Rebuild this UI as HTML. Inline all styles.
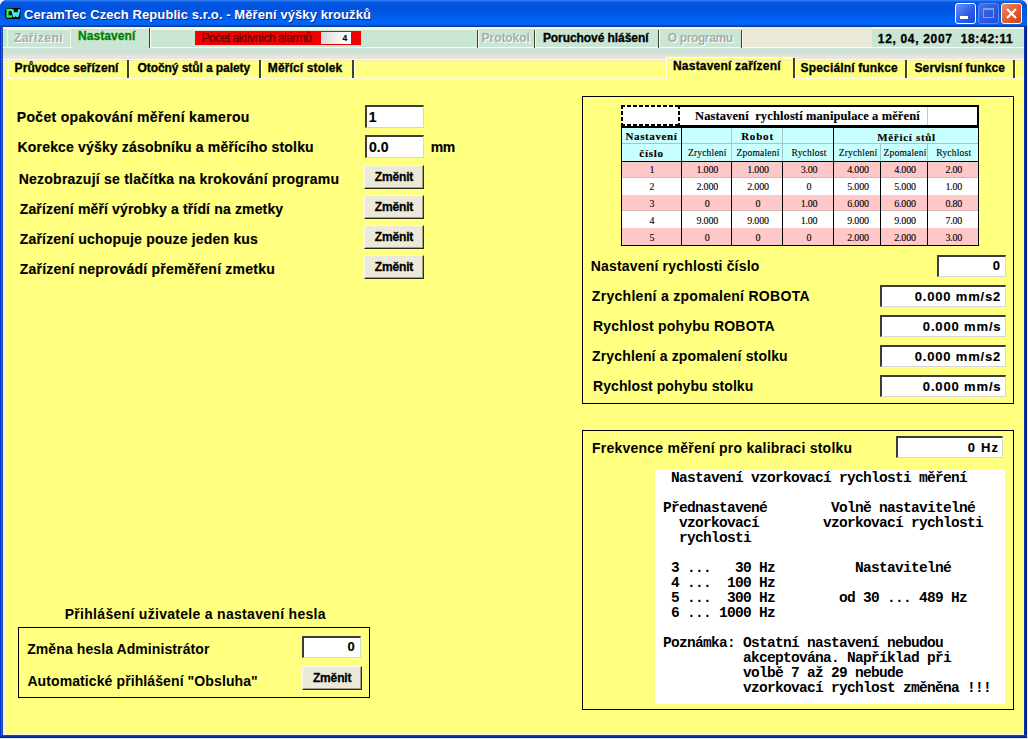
<!DOCTYPE html>
<html><head><meta charset="utf-8"><style>
*{margin:0;padding:0;box-sizing:border-box}
html,body{width:1028px;height:739px;overflow:hidden;position:relative;background:#f0f0f8}
.a{position:absolute}
.t{position:absolute;white-space:pre}
#frame{position:absolute;left:0;top:0;width:1027px;height:738px;background:#0832c0;border-radius:7px 7px 0 0}
#titlebar{position:absolute;left:0;top:0;width:1027px;height:27px;border-radius:7px 7px 0 0;
 background:linear-gradient(to bottom,#3d8eff 0px,#1a6af0 1px,#0757dc 3px,#0052e0 6px,#0055e6 12px,#005ff2 18px,#0066f8 22px,#0060f2 25px,#0a3c9c 26px,#0a3c9c 27px)}
#client{position:absolute;left:3px;top:27px;width:1021px;height:707px;background:#ffff80}
.ctl{position:absolute;width:21px;height:21px;border:1px solid #fff;border-radius:3px}
.inp{position:absolute;background:#fff;border-top:2px solid #3c3c3c;border-left:2px solid #3c3c3c;border-right:1px solid #d8d8d0;border-bottom:1px solid #d8d8d0}
.btn{position:absolute;background:#ece9d8;border-top:1px solid #fafaf4;border-left:1px solid #fafaf4;border-right:1px solid #2a2a1a;border-bottom:1px solid #2a2a1a;box-shadow:inset -1px -1px 0 #a0a090}
.box{position:absolute;border:1px solid #000}
.sep{position:absolute;width:3px;background:#fbfbf0;border-left:2px solid #404030;margin-left:0}

</style></head><body>
<div id="frame"></div>
<div class="a" style="left:0;top:20px;width:3px;height:718px;background:linear-gradient(to right,#0030c8 0 1px,#2c5ce4 1px 2px,#1a46b4 2px 3px)"></div>
<div class="a" style="left:1024px;top:20px;width:3px;height:718px;background:linear-gradient(to right,#0a30b0 0 1px,#0628a0 1px 2px,#001c88 2px 3px)"></div>
<div class="a" style="left:0;top:735px;width:1027px;height:3px;background:linear-gradient(to bottom,#1040c0 0 1px,#0830a8 1px 2px,#001c80 2px 3px)"></div>
<div id="titlebar"></div>
<!-- icon -->
<svg class="a" style="left:0;top:0" width="24" height="24">
<path d="M7 8 H20.5 V17 L19.5 19 H7 L5 17 V10 Z" fill="#000"/>
<path d="M12 10 H7.5 V16.5 H12" stroke="#30f048" stroke-width="2.4" fill="none"/>
<path d="M12.3 9.2 L14 16.8 L15.7 12.5 L17.4 16.8 L19.4 9.2" stroke="#40f0f0" stroke-width="2.2" fill="none" stroke-linejoin="bevel"/>
</svg>
<!-- window controls -->
<div class="ctl" style="left:955px;top:3px;background:linear-gradient(135deg,#6f8ff8,#2a5ce8 60%,#1c48d0)"></div>
<div class="a" style="left:960px;top:16px;width:8px;height:3px;background:#fff"></div>
<div class="ctl" style="left:978px;top:3px;border-color:#5a88f0;background:linear-gradient(135deg,#4a70e8,#2a58e0 60%,#2050d8)"></div>
<div class="a" style="left:983px;top:8px;width:11px;height:10px;border:1px solid #7fa0f0;border-top-width:2px"></div>
<div class="ctl" style="left:1001px;top:3px;background:linear-gradient(135deg,#f08a6a,#e05a30 55%,#c84018)"></div>
<svg class="a" style="left:1001px;top:3px" width="21" height="21"><path d="M6 6 L15 15 M15 6 L6 15" stroke="#fff" stroke-width="2.2"/></svg>
<div id="client"></div>
<div class="a" style="left:3px;top:27px;width:1px;height:707px;background:#e4f6ff"></div>
<div class="a" style="left:4px;top:27px;width:1px;height:707px;background:#eef4d8"></div>
<div class="a" style="left:1023px;top:27px;width:1px;height:707px;background:#f4f8e0"></div>
<div class="a" style="left:3px;top:734px;width:1021px;height:1px;background:#f4f8e0"></div>
<!-- toolbar -->
<div class="a" style="left:3px;top:27px;width:1021px;height:32px;background:#c8e6d3"></div>
<div class="a" style="left:3px;top:27px;width:1021px;height:1px;background:#eef4f8"></div>
<div class="a" style="left:3px;top:28px;width:1021px;height:1px;background:#fbfbf0"></div>
<div class="a" style="left:3px;top:47px;width:69px;height:1px;background:#f4fff8"></div>
<div class="a" style="left:150px;top:47px;width:874px;height:1px;background:#f4fff8"></div>
<div class="a" style="left:3px;top:48px;width:1021px;height:6px;background:#cde3da"></div>
<div class="a" style="left:3px;top:54px;width:1021px;height:2px;background:#d8e6d4"></div>
<div class="a" style="left:3px;top:56px;width:1021px;height:3px;background:#ece4dc"></div>
<div class="a" style="left:7px;top:29px;width:64px;height:19px;border:1px solid #f4f8ec"></div>
<div class="sep" style="left:149px;top:28px;height:20px;width:2px;border-left-width:1px"></div>
<div class="a" style="left:151px;top:29px;width:326px;height:1px;background:#f4f8ec"></div>
<div class="a" style="left:195px;top:31px;width:166px;height:14px;background:#f00000"></div>
<div class="a" style="left:321px;top:32px;width:30px;height:12px;background:linear-gradient(to right,#d8d8d8,#f4f4f4 60%,#fff)"></div>
<div class="sep" style="left:477px;top:30px;height:18px;width:2px;border-left-width:1px"></div>
<div class="sep" style="left:534px;top:30px;height:18px;width:2px;border-left-width:1px"></div>
<div class="sep" style="left:658px;top:30px;height:18px;width:2px;border-left-width:1px"></div>
<div class="sep" style="left:741px;top:30px;height:18px;width:2px;border-left-width:1px"></div>
<div class="a" style="left:743px;top:27px;width:129px;height:20px;background:#ece9d8"></div>
<!-- tab row -->
<div class="a" style="left:3px;top:59px;width:1021px;height:1px;background:#fffce8"></div>
<div class="a" style="left:3px;top:60px;width:1021px;height:1px;background:#f0e8b8"></div>
<div class="a" style="left:3px;top:78px;width:663px;height:1px;background:#fbfbe0"></div>
<div class="a" style="left:794px;top:78px;width:230px;height:1px;background:#fbfbe0"></div>
<div class="a" style="left:8px;top:60px;width:1px;height:18px;background:#fbfbe0"></div>
<div class="sep" style="left:127px;top:60px;height:18px"></div>
<div class="sep" style="left:258.5px;top:60px;height:18px"></div>
<div class="sep" style="left:351.5px;top:60px;height:18px"></div>
<div class="a" style="left:665px;top:60px;width:1px;height:18px;background:#fbfbe0"></div>
<div class="a" style="left:666px;top:57px;width:128px;height:3px;background:#ffff80;border-top:1px solid #fffce8;border-left:1px solid #fffce8"></div>
<div class="a" style="left:666px;top:57px;width:1px;height:22px;background:#fffce8"></div>
<div class="sep" style="left:793px;top:58px;height:20px"></div>
<div class="sep" style="left:905px;top:60px;height:18px"></div>
<div class="sep" style="left:1012.5px;top:60px;height:18px"></div>
<!-- left inputs -->
<div class="inp" style="left:365px;top:105px;width:59px;height:23px"></div>
<div class="inp" style="left:365px;top:135px;width:59px;height:23px"></div>
<div class="btn" style="left:364px;top:165px;width:60px;height:24px"></div>
<div class="btn" style="left:364px;top:195px;width:60px;height:24px"></div>
<div class="btn" style="left:364px;top:225px;width:60px;height:24px"></div>
<div class="btn" style="left:364px;top:255px;width:60px;height:24px"></div>
<!-- right panel 1 -->
<div class="box" style="left:582px;top:96px;width:432px;height:308px"></div>
<div class="inp" style="left:937px;top:255px;width:69px;height:22px"></div>
<div class="inp" style="left:880px;top:285px;width:126px;height:22px"></div>
<div class="inp" style="left:880px;top:315px;width:126px;height:22px"></div>
<div class="inp" style="left:880px;top:345px;width:126px;height:22px"></div>
<div class="inp" style="left:880px;top:375px;width:126px;height:22px"></div>
<!-- right panel 2 -->
<div class="box" style="left:582px;top:430px;width:432px;height:280px"></div>
<div class="inp" style="left:896px;top:436px;width:107px;height:22px"></div>
<div class="a" style="left:655px;top:470px;width:350px;height:234px;background:#fff"></div>
<!-- bottom left -->
<div class="box" style="left:18px;top:627px;width:352px;height:71px"></div>
<div class="inp" style="left:302px;top:636px;width:59px;height:22px"></div>
<div class="btn" style="left:302px;top:666px;width:60px;height:24px"></div>
<!-- table -->
<div class="a" style="left:621px;top:105px;width:59px;height:22px;background:#fff"></div>
<div class="a" style="left:621px;top:105px;width:59px;height:2px;background:repeating-linear-gradient(to right,#000 0 4px,#fff 4px 6px)"></div>
<div class="a" style="left:621px;top:124px;width:59px;height:2px;background:repeating-linear-gradient(to right,#000 0 4px,#fff 4px 6px)"></div>
<div class="a" style="left:621px;top:105px;width:2px;height:21px;background:repeating-linear-gradient(to bottom,#000 0 4px,#fff 4px 6px)"></div>
<div class="a" style="left:678px;top:105px;width:2px;height:21px;background:repeating-linear-gradient(to bottom,#000 0 4px,#fff 4px 6px)"></div>
<div class="a" style="left:680px;top:105px;width:299px;height:23px;background:#fff;border-top:2px solid #000;border-bottom:3px solid #000;border-right:2px solid #000"></div>
<div class="a" style="left:927px;top:107px;width:1px;height:18px;background:#c8c8c8"></div>
<div class="a" style="left:621px;top:126px;width:60px;height:2px;background:#000"></div>
<div class="a" style="left:621px;top:128px;width:357px;height:33px;background:#c8ffff"></div>
<div class="a" style="left:621px;top:143px;width:357px;height:1px;background:#a0c8c8"></div>
<div class="a" style="left:621px;top:161px;width:358px;height:1px;background:#000"></div>
<div class="a" style="left:622px;top:162px;width:356px;height:16px;background:#ffc8c8"></div>
<div class="a" style="left:622px;top:177px;width:356px;height:1px;background:#d8b8b8"></div>
<div class="a" style="left:622px;top:178px;width:356px;height:17px;background:#fff"></div>
<div class="a" style="left:622px;top:195px;width:356px;height:16px;background:#ffc8c8"></div>
<div class="a" style="left:622px;top:210px;width:356px;height:1px;background:#d8b8b8"></div>
<div class="a" style="left:622px;top:211px;width:356px;height:17px;background:#fff"></div>
<div class="a" style="left:622px;top:228px;width:356px;height:17px;background:#ffc8c8"></div>
<div class="a" style="left:621px;top:245px;width:358px;height:1px;background:#000"></div>
<div class="a" style="left:621px;top:127px;width:1px;height:119px;background:#000"></div>
<div class="a" style="left:978px;top:127px;width:1px;height:119px;background:#000"></div>
<div class="a" style="left:681px;top:128px;width:1px;height:118px;background:#000"></div>
<div class="a" style="left:833px;top:128px;width:1px;height:118px;background:#000"></div>
<div class="a" style="left:731px;top:128px;width:1px;height:33px;background:#a0c8c8"></div>
<div class="a" style="left:782px;top:128px;width:1px;height:33px;background:#a0c8c8"></div>
<div class="a" style="left:880px;top:144px;width:1px;height:17px;background:#a0c8c8"></div>
<div class="a" style="left:927px;top:144px;width:1px;height:17px;background:#a0c8c8"></div>
<div class="a" style="left:731px;top:161px;width:1px;height:84px;background:#000"></div>
<div class="a" style="left:782px;top:161px;width:1px;height:84px;background:#000"></div>
<div class="a" style="left:880px;top:161px;width:1px;height:84px;background:#000"></div>
<div class="a" style="left:927px;top:161px;width:1px;height:84px;background:#000"></div>
<!-- mono block -->
<pre class="t" id="mono" style="left:655px;top:471px;font:bold 14.5px 'Liberation Mono',monospace;letter-spacing:-0.7px;line-height:15px;color:#000">  Nastavení vzorkovací rychlosti měření

 Přednastavené        Volně nastavitelné
   vzorkovací        vzorkovací rychlosti
   rychlosti

  3 ...   30 Hz          Nastavitelné
  4 ...  100 Hz
  5 ...  300 Hz        od 30 ... 489 Hz
  6 ... 1000 Hz

 Poznámka: Ostatní nastavení nebudou
           akceptována. Například při
           volbě 7 až 29 nebude
           vzorkovací rychlost změněna !!!</pre>

<div class="t" style="left:24px;top:6.7px;font:normal bold 13px 'Liberation Sans', sans-serif;line-height:16px;color:#fff;letter-spacing:0.077px;text-shadow:1px 1px 0 #0a2a8a;-webkit-text-stroke:0;">CeramTec Czech Republic s.r.o. - Měření výšky kroužků</div>
<div class="t" style="left:13.9px;top:29.7px;font:normal bold 12px 'Liberation Sans', sans-serif;line-height:16px;color:#a8aca8;letter-spacing:0.471px;text-shadow:1px 1px 0 #fff;">Zařízení</div>
<div class="t" style="-webkit-text-stroke:0.3px #008000;left:78px;top:27.7px;font:normal bold 12px 'Liberation Sans', sans-serif;line-height:16px;color:#008000;letter-spacing:0.075px;">Nastavení</div>
<div class="t" style="left:201.6px;top:29.5px;font:normal normal 12px 'Liberation Sans', sans-serif;line-height:16px;color:#500000;letter-spacing:-0.524px;">Počet aktivních alarmů</div>
<div class="t" style="-webkit-text-stroke:0.15px #000;left:342.5px;top:30px;font:normal bold 8.5px 'Liberation Sans', sans-serif;line-height:16px;color:#000;letter-spacing:0px;">4</div>
<div class="t" style="left:481.6px;top:29.5px;font:normal bold 12px 'Liberation Sans', sans-serif;line-height:16px;color:#a8aca8;letter-spacing:-0.071px;text-shadow:1px 1px 0 #fff;">Protokol</div>
<div class="t" style="-webkit-text-stroke:0.3px #000;left:542.9px;top:29.7px;font:normal bold 12px 'Liberation Sans', sans-serif;line-height:16px;color:#000;letter-spacing:-0.069px;">Poruchové hlášení</div>
<div class="t" style="left:667.8px;top:29.7px;font:normal bold 12px 'Liberation Sans', sans-serif;line-height:16px;color:#a8aca8;letter-spacing:-0.378px;text-shadow:1px 1px 0 #fff;">O programu</div>
<div class="t" style="-webkit-text-stroke:0.3px #000;left:877.8px;top:30.6px;font:normal bold 12px 'Liberation Sans', sans-serif;line-height:16px;color:#000;letter-spacing:0.676px;">12, 04, 2007  18:42:11</div>
<div class="t" style="-webkit-text-stroke:0.3px #000;left:14.6px;top:59.7px;font:normal bold 12px 'Liberation Sans', sans-serif;line-height:16px;color:#000;letter-spacing:0.069px;">Průvodce seřízení</div>
<div class="t" style="-webkit-text-stroke:0.3px #000;left:137.5px;top:59.7px;font:normal bold 12px 'Liberation Sans', sans-serif;line-height:16px;color:#000;letter-spacing:-0.074px;">Otočný stůl a palety</div>
<div class="t" style="-webkit-text-stroke:0.3px #000;left:267.8px;top:59.7px;font:normal bold 12px 'Liberation Sans', sans-serif;line-height:16px;color:#000;letter-spacing:0.142px;">Měřící stolek</div>
<div class="t" style="-webkit-text-stroke:0.3px #000;left:673px;top:57.7px;font:normal bold 12px 'Liberation Sans', sans-serif;line-height:16px;color:#000;letter-spacing:0.206px;">Nastavení zařízení</div>
<div class="t" style="-webkit-text-stroke:0.3px #000;left:800.6px;top:59.7px;font:normal bold 12px 'Liberation Sans', sans-serif;line-height:16px;color:#000;letter-spacing:0.16px;">Speciální funkce</div>
<div class="t" style="-webkit-text-stroke:0.3px #000;left:914.5px;top:59.7px;font:normal bold 12px 'Liberation Sans', sans-serif;line-height:16px;color:#000;letter-spacing:0.121px;">Servisní funkce</div>
<div class="t" style="-webkit-text-stroke:0.15px #000;left:16.8px;top:108.8px;font:normal bold 14px 'Liberation Sans', sans-serif;line-height:16px;color:#000;letter-spacing:0.321px;">Počet opakování měření kamerou</div>
<div class="t" style="-webkit-text-stroke:0.15px #000;left:17.6px;top:139.1px;font:normal bold 14px 'Liberation Sans', sans-serif;line-height:16px;color:#000;letter-spacing:0.165px;">Korekce výšky zásobníku a měřícího stolku</div>
<div class="t" style="-webkit-text-stroke:0.15px #000;left:18.7px;top:171px;font:normal bold 14px 'Liberation Sans', sans-serif;line-height:16px;color:#000;letter-spacing:0.241px;">Nezobrazují se tlačítka na krokování programu</div>
<div class="t" style="-webkit-text-stroke:0.15px #000;left:19.7px;top:201px;font:normal bold 14px 'Liberation Sans', sans-serif;line-height:16px;color:#000;letter-spacing:0.155px;">Zařízení měří výrobky a třídí na zmetky</div>
<div class="t" style="-webkit-text-stroke:0.15px #000;left:19.7px;top:231px;font:normal bold 14px 'Liberation Sans', sans-serif;line-height:16px;color:#000;letter-spacing:0.2px;">Zařízení uchopuje pouze jeden kus</div>
<div class="t" style="-webkit-text-stroke:0.15px #000;left:19.7px;top:261px;font:normal bold 14px 'Liberation Sans', sans-serif;line-height:16px;color:#000;letter-spacing:0.224px;">Zařízení neprovádí přeměření zmetku</div>
<div class="t" style="-webkit-text-stroke:0.15px #000;left:430.8px;top:139px;font:normal bold 14px 'Liberation Sans', sans-serif;line-height:16px;color:#000;letter-spacing:-0.6px;">mm</div>
<div class="t" style="-webkit-text-stroke:0.15px #000;left:368.7px;top:108.8px;font:normal bold 14px 'Liberation Sans', sans-serif;line-height:16px;color:#000;letter-spacing:0px;">1</div>
<div class="t" style="-webkit-text-stroke:0.15px #000;left:369px;top:138.6px;font:normal bold 14px 'Liberation Sans', sans-serif;line-height:16px;color:#000;letter-spacing:0.0px;">0.0</div>
<div class="t" style="-webkit-text-stroke:0.3px #000;left:374.8px;top:168.9px;font:normal bold 12px 'Liberation Sans', sans-serif;line-height:16px;color:#000;letter-spacing:-0.16px;">Změnit</div>
<div class="t" style="-webkit-text-stroke:0.3px #000;left:374.8px;top:198.9px;font:normal bold 12px 'Liberation Sans', sans-serif;line-height:16px;color:#000;letter-spacing:-0.16px;">Změnit</div>
<div class="t" style="-webkit-text-stroke:0.3px #000;left:374.8px;top:228.9px;font:normal bold 12px 'Liberation Sans', sans-serif;line-height:16px;color:#000;letter-spacing:-0.16px;">Změnit</div>
<div class="t" style="-webkit-text-stroke:0.3px #000;left:374.8px;top:258.9px;font:normal bold 12px 'Liberation Sans', sans-serif;line-height:16px;color:#000;letter-spacing:-0.16px;">Změnit</div>
<div class="t" style="left:590.8px;top:257.8px;font:normal bold 14px 'Liberation Sans', sans-serif;line-height:16px;color:#000;letter-spacing:0.179px;">Nastavení rychlosti číslo</div>
<div class="t" style="left:591.8px;top:288.2px;font:normal bold 14px 'Liberation Sans', sans-serif;line-height:16px;color:#000;letter-spacing:0.296px;">Zrychlení a zpomalení ROBOTA</div>
<div class="t" style="left:592.9px;top:318px;font:normal bold 14px 'Liberation Sans', sans-serif;line-height:16px;color:#000;letter-spacing:0.224px;">Rychlost pohybu ROBOTA</div>
<div class="t" style="left:592px;top:348.4px;font:normal bold 14px 'Liberation Sans', sans-serif;line-height:16px;color:#000;letter-spacing:0.159px;">Zrychlení a zpomalení stolku</div>
<div class="t" style="left:593px;top:378.3px;font:normal bold 14px 'Liberation Sans', sans-serif;line-height:16px;color:#000;letter-spacing:0.076px;">Rychlost pohybu stolku</div>
<div class="t" style="-webkit-text-stroke:0.15px #000;left:992.7px;top:258.4px;font:normal bold 13px 'Liberation Sans', sans-serif;line-height:16px;color:#000;letter-spacing:0px;">0</div>
<div class="t" style="-webkit-text-stroke:0.15px #000;left:914.8px;top:288.7px;font:normal bold 13px 'Liberation Sans', sans-serif;line-height:16px;color:#000;letter-spacing:0.81px;">0.000 mm/s2</div>
<div class="t" style="-webkit-text-stroke:0.15px #000;left:922.8px;top:318.7px;font:normal bold 13px 'Liberation Sans', sans-serif;line-height:16px;color:#000;letter-spacing:0.856px;">0.000 mm/s</div>
<div class="t" style="-webkit-text-stroke:0.15px #000;left:914.8px;top:348.7px;font:normal bold 13px 'Liberation Sans', sans-serif;line-height:16px;color:#000;letter-spacing:0.81px;">0.000 mm/s2</div>
<div class="t" style="-webkit-text-stroke:0.15px #000;left:922.8px;top:378.7px;font:normal bold 13px 'Liberation Sans', sans-serif;line-height:16px;color:#000;letter-spacing:0.856px;">0.000 mm/s</div>
<div class="t" style="left:591.9px;top:439.7px;font:normal bold 14px 'Liberation Sans', sans-serif;line-height:16px;color:#000;letter-spacing:0.247px;">Frekvence měření pro kalibraci stolku</div>
<div class="t" style="-webkit-text-stroke:0.15px #000;left:967.7px;top:439.5px;font:normal bold 13px 'Liberation Sans', sans-serif;line-height:16px;color:#000;letter-spacing:1.2px;">0 Hz</div>
<div class="t" style="left:64.7px;top:606px;font:normal bold 14px 'Liberation Sans', sans-serif;line-height:16px;color:#000;letter-spacing:0.3px;">Přihlášení uživatele a nastavení hesla</div>
<div class="t" style="left:27.2px;top:640.7px;font:normal bold 14px 'Liberation Sans', sans-serif;line-height:16px;color:#000;letter-spacing:0.092px;">Změna hesla Administrátor</div>
<div class="t" style="left:27.4px;top:673px;font:normal bold 14px 'Liberation Sans', sans-serif;line-height:16px;color:#000;letter-spacing:0.1px;">Automatické přihlášení &quot;Obsluha&quot;</div>
<div class="t" style="-webkit-text-stroke:0.15px #000;left:347.6px;top:639.4px;font:normal bold 13px 'Liberation Sans', sans-serif;line-height:16px;color:#000;letter-spacing:0px;">0</div>
<div class="t" style="-webkit-text-stroke:0.3px #000;left:312.9px;top:669.9px;font:normal bold 12px 'Liberation Sans', sans-serif;line-height:16px;color:#000;letter-spacing:-0.14px;">Změnit</div>
<div class="t" style="-webkit-text-stroke:0.12px #000;left:695px;top:107.9px;font:normal bold 12.5px 'Liberation Serif', serif;line-height:16px;color:#000;letter-spacing:0.108px;">Nastavení  rychlostí manipulace a měření</div>
<div class="t" style="-webkit-text-stroke:0.12px #000;left:622px;width:59px;text-align:center;top:127.7px;font:normal bold 11px 'Liberation Serif', serif;line-height:16px;color:#000;letter-spacing:0.6px;">Nastavení</div>
<div class="t" style="-webkit-text-stroke:0.12px #000;left:732px;width:51px;text-align:center;top:127.7px;font:normal bold 11px 'Liberation Serif', serif;line-height:16px;color:#000;letter-spacing:0.8px;">Robot</div>
<div class="t" style="-webkit-text-stroke:0.12px #000;left:834px;width:145px;text-align:center;top:128.8px;font:normal bold 11px 'Liberation Serif', serif;line-height:16px;color:#000;letter-spacing:0.7px;">Měřicí stůl</div>
<div class="t" style="-webkit-text-stroke:0.12px #000;left:622px;width:59px;text-align:center;top:144.6px;font:normal bold 11px 'Liberation Serif', serif;line-height:16px;color:#000;letter-spacing:0.7px;">číslo</div>
<div class="t" style="-webkit-text-stroke:0.1px #000;left:682px;width:50.5px;text-align:center;top:144.5px;font:normal normal 9.5px 'Liberation Serif', serif;line-height:16px;color:#000;letter-spacing:0.2px;">Zrychlení</div>
<div class="t" style="-webkit-text-stroke:0.1px #000;left:732.5px;width:51.0px;text-align:center;top:144.5px;font:normal normal 9.5px 'Liberation Serif', serif;line-height:16px;color:#000;letter-spacing:0.2px;">Zpomalení</div>
<div class="t" style="-webkit-text-stroke:0.1px #000;left:783.5px;width:51.0px;text-align:center;top:144.5px;font:normal normal 9.5px 'Liberation Serif', serif;line-height:16px;color:#000;letter-spacing:0.2px;">Rychlost</div>
<div class="t" style="-webkit-text-stroke:0.1px #000;left:834.5px;width:47.0px;text-align:center;top:144.5px;font:normal normal 9.5px 'Liberation Serif', serif;line-height:16px;color:#000;letter-spacing:0.2px;">Zrychlení</div>
<div class="t" style="-webkit-text-stroke:0.1px #000;left:881.5px;width:47.0px;text-align:center;top:144.5px;font:normal normal 9.5px 'Liberation Serif', serif;line-height:16px;color:#000;letter-spacing:0.2px;">Zpomalení</div>
<div class="t" style="-webkit-text-stroke:0.1px #000;left:928.5px;width:50.5px;text-align:center;top:144.5px;font:normal normal 9.5px 'Liberation Serif', serif;line-height:16px;color:#000;letter-spacing:0.2px;">Rychlost</div>
<div class="t" style="-webkit-text-stroke:0.1px #000;left:622px;width:60px;text-align:center;top:162px;font:normal normal 10px 'Liberation Serif', serif;line-height:16px;color:#000;letter-spacing:-0.2px;">1</div>
<div class="t" style="-webkit-text-stroke:0.1px #000;left:682px;width:50.5px;text-align:center;top:162px;font:normal normal 10px 'Liberation Serif', serif;line-height:16px;color:#000;letter-spacing:-0.2px;">1.000</div>
<div class="t" style="-webkit-text-stroke:0.1px #000;left:732.5px;width:51.0px;text-align:center;top:162px;font:normal normal 10px 'Liberation Serif', serif;line-height:16px;color:#000;letter-spacing:-0.2px;">1.000</div>
<div class="t" style="-webkit-text-stroke:0.1px #000;left:783.5px;width:51.0px;text-align:center;top:162px;font:normal normal 10px 'Liberation Serif', serif;line-height:16px;color:#000;letter-spacing:-0.2px;">3.00</div>
<div class="t" style="-webkit-text-stroke:0.1px #000;left:834.5px;width:47.0px;text-align:center;top:162px;font:normal normal 10px 'Liberation Serif', serif;line-height:16px;color:#000;letter-spacing:-0.2px;">4.000</div>
<div class="t" style="-webkit-text-stroke:0.1px #000;left:881.5px;width:47.0px;text-align:center;top:162px;font:normal normal 10px 'Liberation Serif', serif;line-height:16px;color:#000;letter-spacing:-0.2px;">4.000</div>
<div class="t" style="-webkit-text-stroke:0.1px #000;left:928.5px;width:50.5px;text-align:center;top:162px;font:normal normal 10px 'Liberation Serif', serif;line-height:16px;color:#000;letter-spacing:-0.2px;">2.00</div>
<div class="t" style="-webkit-text-stroke:0.1px #000;left:622px;width:60px;text-align:center;top:179px;font:normal normal 10px 'Liberation Serif', serif;line-height:16px;color:#000;letter-spacing:-0.2px;">2</div>
<div class="t" style="-webkit-text-stroke:0.1px #000;left:682px;width:50.5px;text-align:center;top:179px;font:normal normal 10px 'Liberation Serif', serif;line-height:16px;color:#000;letter-spacing:-0.2px;">2.000</div>
<div class="t" style="-webkit-text-stroke:0.1px #000;left:732.5px;width:51.0px;text-align:center;top:179px;font:normal normal 10px 'Liberation Serif', serif;line-height:16px;color:#000;letter-spacing:-0.2px;">2.000</div>
<div class="t" style="-webkit-text-stroke:0.1px #000;left:783.5px;width:51.0px;text-align:center;top:179px;font:normal normal 10px 'Liberation Serif', serif;line-height:16px;color:#000;letter-spacing:-0.2px;">0</div>
<div class="t" style="-webkit-text-stroke:0.1px #000;left:834.5px;width:47.0px;text-align:center;top:179px;font:normal normal 10px 'Liberation Serif', serif;line-height:16px;color:#000;letter-spacing:-0.2px;">5.000</div>
<div class="t" style="-webkit-text-stroke:0.1px #000;left:881.5px;width:47.0px;text-align:center;top:179px;font:normal normal 10px 'Liberation Serif', serif;line-height:16px;color:#000;letter-spacing:-0.2px;">5.000</div>
<div class="t" style="-webkit-text-stroke:0.1px #000;left:928.5px;width:50.5px;text-align:center;top:179px;font:normal normal 10px 'Liberation Serif', serif;line-height:16px;color:#000;letter-spacing:-0.2px;">1.00</div>
<div class="t" style="-webkit-text-stroke:0.1px #000;left:622px;width:60px;text-align:center;top:196px;font:normal normal 10px 'Liberation Serif', serif;line-height:16px;color:#000;letter-spacing:-0.2px;">3</div>
<div class="t" style="-webkit-text-stroke:0.1px #000;left:682px;width:50.5px;text-align:center;top:196px;font:normal normal 10px 'Liberation Serif', serif;line-height:16px;color:#000;letter-spacing:-0.2px;">0</div>
<div class="t" style="-webkit-text-stroke:0.1px #000;left:732.5px;width:51.0px;text-align:center;top:196px;font:normal normal 10px 'Liberation Serif', serif;line-height:16px;color:#000;letter-spacing:-0.2px;">0</div>
<div class="t" style="-webkit-text-stroke:0.1px #000;left:783.5px;width:51.0px;text-align:center;top:196px;font:normal normal 10px 'Liberation Serif', serif;line-height:16px;color:#000;letter-spacing:-0.2px;">1.00</div>
<div class="t" style="-webkit-text-stroke:0.1px #000;left:834.5px;width:47.0px;text-align:center;top:196px;font:normal normal 10px 'Liberation Serif', serif;line-height:16px;color:#000;letter-spacing:-0.2px;">6.000</div>
<div class="t" style="-webkit-text-stroke:0.1px #000;left:881.5px;width:47.0px;text-align:center;top:196px;font:normal normal 10px 'Liberation Serif', serif;line-height:16px;color:#000;letter-spacing:-0.2px;">6.000</div>
<div class="t" style="-webkit-text-stroke:0.1px #000;left:928.5px;width:50.5px;text-align:center;top:196px;font:normal normal 10px 'Liberation Serif', serif;line-height:16px;color:#000;letter-spacing:-0.2px;">0.80</div>
<div class="t" style="-webkit-text-stroke:0.1px #000;left:622px;width:60px;text-align:center;top:213px;font:normal normal 10px 'Liberation Serif', serif;line-height:16px;color:#000;letter-spacing:-0.2px;">4</div>
<div class="t" style="-webkit-text-stroke:0.1px #000;left:682px;width:50.5px;text-align:center;top:213px;font:normal normal 10px 'Liberation Serif', serif;line-height:16px;color:#000;letter-spacing:-0.2px;">9.000</div>
<div class="t" style="-webkit-text-stroke:0.1px #000;left:732.5px;width:51.0px;text-align:center;top:213px;font:normal normal 10px 'Liberation Serif', serif;line-height:16px;color:#000;letter-spacing:-0.2px;">9.000</div>
<div class="t" style="-webkit-text-stroke:0.1px #000;left:783.5px;width:51.0px;text-align:center;top:213px;font:normal normal 10px 'Liberation Serif', serif;line-height:16px;color:#000;letter-spacing:-0.2px;">1.00</div>
<div class="t" style="-webkit-text-stroke:0.1px #000;left:834.5px;width:47.0px;text-align:center;top:213px;font:normal normal 10px 'Liberation Serif', serif;line-height:16px;color:#000;letter-spacing:-0.2px;">9.000</div>
<div class="t" style="-webkit-text-stroke:0.1px #000;left:881.5px;width:47.0px;text-align:center;top:213px;font:normal normal 10px 'Liberation Serif', serif;line-height:16px;color:#000;letter-spacing:-0.2px;">9.000</div>
<div class="t" style="-webkit-text-stroke:0.1px #000;left:928.5px;width:50.5px;text-align:center;top:213px;font:normal normal 10px 'Liberation Serif', serif;line-height:16px;color:#000;letter-spacing:-0.2px;">7.00</div>
<div class="t" style="-webkit-text-stroke:0.1px #000;left:622px;width:60px;text-align:center;top:230px;font:normal normal 10px 'Liberation Serif', serif;line-height:16px;color:#000;letter-spacing:-0.2px;">5</div>
<div class="t" style="-webkit-text-stroke:0.1px #000;left:682px;width:50.5px;text-align:center;top:230px;font:normal normal 10px 'Liberation Serif', serif;line-height:16px;color:#000;letter-spacing:-0.2px;">0</div>
<div class="t" style="-webkit-text-stroke:0.1px #000;left:732.5px;width:51.0px;text-align:center;top:230px;font:normal normal 10px 'Liberation Serif', serif;line-height:16px;color:#000;letter-spacing:-0.2px;">0</div>
<div class="t" style="-webkit-text-stroke:0.1px #000;left:783.5px;width:51.0px;text-align:center;top:230px;font:normal normal 10px 'Liberation Serif', serif;line-height:16px;color:#000;letter-spacing:-0.2px;">0</div>
<div class="t" style="-webkit-text-stroke:0.1px #000;left:834.5px;width:47.0px;text-align:center;top:230px;font:normal normal 10px 'Liberation Serif', serif;line-height:16px;color:#000;letter-spacing:-0.2px;">2.000</div>
<div class="t" style="-webkit-text-stroke:0.1px #000;left:881.5px;width:47.0px;text-align:center;top:230px;font:normal normal 10px 'Liberation Serif', serif;line-height:16px;color:#000;letter-spacing:-0.2px;">2.000</div>
<div class="t" style="-webkit-text-stroke:0.1px #000;left:928.5px;width:50.5px;text-align:center;top:230px;font:normal normal 10px 'Liberation Serif', serif;line-height:16px;color:#000;letter-spacing:-0.2px;">3.00</div>
</body></html>
